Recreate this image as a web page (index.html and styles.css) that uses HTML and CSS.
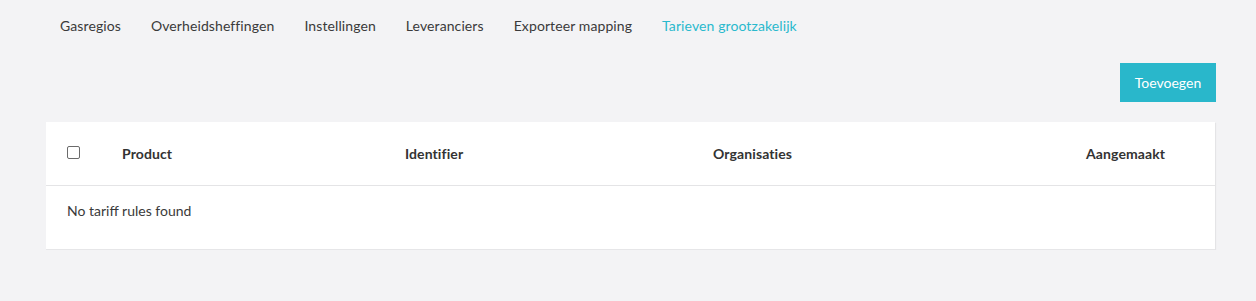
FILE: index.html
```html
<!DOCTYPE html>
<html>
<head>
<meta charset="utf-8">
<link rel="stylesheet" href="styles.css">
</head>
<body>
<div class="page">
  <nav class="tabs">
    <a class="tab">Gasregios</a>
    <a class="tab">Overheidsheffingen</a>
    <a class="tab">Instellingen</a>
    <a class="tab">Leveranciers</a>
    <a class="tab">Exporteer mapping</a>
    <a class="tab active">Tarieven grootzakelijk</a>
  </nav>
  <div class="toolbar">
    <button class="btn-primary">Toevoegen</button>
  </div>
  <div class="card">
    <div class="thead">
      <div class="cell check"><span class="checkbox"></span></div>
      <div class="cell">Product</div>
      <div class="cell">Identifier</div>
      <div class="cell">Organisaties</div>
      <div class="cell">Aangemaakt</div>
    </div>
    <div class="tbody">
      <div class="empty">No tariff rules found</div>
    </div>
  </div>
</div>
</body>
</html>
```
FILE: styles.css
```css
html, body {
  margin: 0;
  padding: 0;
  background: #f3f3f5;
  font-family: Lato, "Open Sans", sans-serif;
  color: #3a3a3a;
  font-size: 14px;
}
.page {
  padding: 0 40px 0 46px;
}
.tabs {
  display: flex;
  padding-top: 16px;
  height: 20px;
  line-height: 20px;
}
.tab {
  padding: 0 15px 0 14px;
  color: #3a3a3a;
  font-size: 14px;
  letter-spacing: 0.1px;
  cursor: pointer;
}
.tab + .tab {
  padding-left: 15px;
}
.tab.active {
  color: #2ab9cd;
}
.toolbar {
  display: flex;
  justify-content: flex-end;
  margin-top: 27px;
}
.btn-primary {
  width: 96px;
  height: 39px;
  background: #29b7cb;
  color: #fff;
  border: none;
  font-family: Lato, "Open Sans", sans-serif;
  font-size: 14px;
  padding: 0;
}
.card {
  margin-top: 20px;
  background: #fff;
  width: 1169px;
  box-shadow: 1px 1px 1px rgba(0, 0, 0, 0.06);
  border-bottom: 1px solid #e6e6e8;
}
.thead {
  display: grid;
  grid-template-columns: 76px 283px 308px 373px 1fr;
  height: 63px;
  align-items: center;
  border-bottom: 1px solid #e4e4e6;
  font-weight: 700;
  color: #333;
  letter-spacing: 0.1px;
}
.cell.check {
  padding-left: 21px;
  display: flex;
  align-items: center;
}
.checkbox {
  display: block;
  width: 11px;
  height: 11px;
  border: 1px solid #6b6b6b;
  border-radius: 2px;
  margin-top: -2px;
}
.tbody {
  height: 63px;
}
.empty {
  padding: 15px 21px 0;
  line-height: 20px;
  color: #3a3a3a;
}
```
